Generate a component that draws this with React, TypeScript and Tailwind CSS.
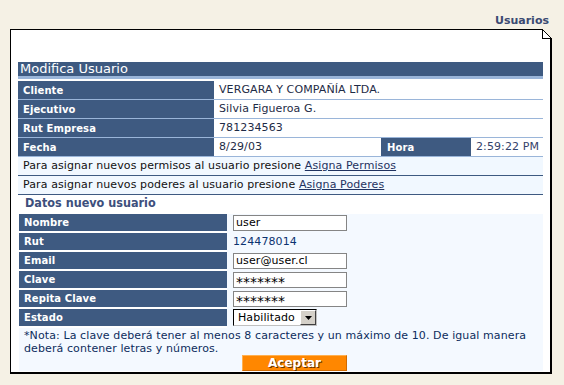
import React from 'react';

const verdana = "font-['DejaVu_Sans','Verdana',sans-serif]";
const tahoma = "font-['DejaVu_Sans_Condensed','DejaVu_Sans',sans-serif] [font-stretch:condensed]";

interface InfoRow {
  label: string;
  value: string;
}

const infoRows: InfoRow[] = [
  { label: 'Cliente', value: 'VERGARA Y COMPAÑÍA LTDA.' },
  { label: 'Ejecutivo', value: 'Silvia Figueroa G.' },
  { label: 'Rut Empresa', value: '781234563' },
];

const Label: React.FC<{ children: React.ReactNode; className?: string }> = ({ children, className = '' }) => (
  <div className={`bg-[#3e5a81] text-white font-bold text-[10px] flex items-center ${className}`}>
    {children}
  </div>
);

const TextInput: React.FC<{ value: string; secret?: boolean }> = ({ value, secret }) => (
  <div
    className={`w-[114px] h-[16px] bg-white border border-[#858585] pl-[2px] text-black ${
      secret ? 'text-[14px] leading-[12px] pt-[3px] tracking-normal' : 'text-[11px] leading-[14px]'
    }`}
  >
    {value}
  </div>
);

const FormRow: React.FC<{ label: string; children?: React.ReactNode }> = ({ label, children }) => (
  <div className="flex h-[19px]">
    <Label className="w-[208px] h-[17px] pl-[5px]">{label}</Label>
    <div className="flex-1 bg-[#f4f9ff] pl-[6px] flex items-start pt-[1px]">{children}</div>
  </div>
);

export default function App() {
  return (
    <div className={`w-[564px] h-[385px] bg-[#f5f1e5] pt-[13px] tracking-[0.1px] ${verdana}`}>
      <div className="flex justify-end pr-[15px] h-[16px] text-[11px] leading-[16px] font-bold text-[#3b4a72] tracking-normal">
        Usuarios
      </div>

      <div className="relative ml-[10px] w-[542px] bg-white border-l border-t border-r-2 border-b-2 border-black pt-[32px] px-[7px] pb-[1px]">
        {/* folded corner */}
        <svg className="absolute -top-px -right-[2px]" width="10" height="10" viewBox="0 0 10 10">
          <polygon points="0,0 10,0 10,10" fill="#f5f1e5" />
          <line x1="0.5" y1="0" x2="0.5" y2="9.5" stroke="#000" strokeWidth="1" />
          <line x1="0" y1="9.5" x2="10" y2="9.5" stroke="#000" strokeWidth="1" />
          <line x1="0" y1="0" x2="10" y2="10" stroke="#000" strokeWidth="1" />
        </svg>

        <div className="h-[14px] bg-[#3e5a81] text-white text-[13px] leading-[14px] pl-[2px] tracking-normal">Modifica Usuario</div>
        <div className="h-[3px] bg-[#9ab5d9]" />
        <div className="h-[2px]" />

        {infoRows.map((row) => (
          <div key={row.label} className="flex h-[19px] border-b border-[#9ab5d9]">
            <Label className="w-[196px] pl-[5px]">{row.label}</Label>
            <div className="flex-1 pl-[5px] flex items-center text-[11px] text-[#1e2b46]">{row.value}</div>
          </div>
        ))}
        <div className="flex h-[19px] border-b border-[#9ab5d9]">
          <Label className="w-[196px] pl-[5px]">Fecha</Label>
          <div className="w-[167px] pl-[5px] flex items-center text-[11px] text-[#1e2b46]">8/29/03</div>
          <Label className="w-[90px] pl-[6px]">Hora</Label>
          <div className="flex-1 pl-[5px] flex items-center text-[11px] text-[#34426a]">2:59:22 PM</div>
        </div>

        <div className="h-[19px] bg-[#f1f8ff] border-b border-[#3e5a81] pl-[5px] flex items-center text-[11px] text-[#111]">
          Para asignar nuevos permisos al usuario presione&nbsp;
          <a href="#" className="underline text-[#1f3260]">Asigna Permisos</a>
        </div>
        <div className="h-[19px] bg-[#f1f8ff] border-b border-[#3e5a81] pl-[5px] flex items-center text-[11px] text-[#111]">
          Para asignar nuevos poderes al usuario presione&nbsp;
          <a href="#" className="underline text-[#1f3260]">Asigna Poderes</a>
        </div>

        <div className={`h-[19px] pt-[1px] pl-[7px] text-[12.5px] leading-[14px] font-bold text-[#3d4f7c] tracking-normal ${tahoma}`}>
          Datos nuevo usuario
        </div>

        <div className="pl-px">
          <FormRow label="Nombre">
            <TextInput value="user" />
          </FormRow>
          <FormRow label="Rut">
            <span className="text-[11px] leading-[16px] text-[#0c3370]">124478014</span>
          </FormRow>
          <FormRow label="Email">
            <TextInput value="user@user.cl" />
          </FormRow>
          <FormRow label="Clave">
            <TextInput value="*******" secret />
          </FormRow>
          <FormRow label="Repita Clave">
            <TextInput value="*******" secret />
          </FormRow>
          <FormRow label="Estado">
            <div className="flex w-[84px] h-[17px] -mt-px bg-white border border-black border-r-[#c0c0c0] border-b-[#c0c0c0]">
              <div className="flex-1 pl-[4px] text-[11px] leading-[15px] text-black">Habilitado</div>
              <div className="w-[16px] h-[15px] bg-[#d4d0c8] border border-t-white border-l-white border-r-[#404040] border-b-[#404040] flex items-center justify-center">
                <svg width="7" height="4" viewBox="0 0 7 4">
                  <polygon points="0,0 7,0 3.5,4" fill="#000" />
                </svg>
              </div>
            </div>
          </FormRow>

          <div className="bg-[#f4f9ff] pt-px pl-[5px] text-[11px] leading-[13px] text-[#0d2d5d]">
            *Nota: La clave deberá tener al menos 8 caracteres y un máximo de 10. De igual manera
            <br />
            deberá contener letras y números.
          </div>
          <div className="bg-[#f4f9ff] h-[16px] pl-[223px] flex">
            <button className="w-[105px] h-[16px] bg-[#ff8700] border border-t-[#ffb050] border-l-[#ffb050] border-r-[#d06a00] border-b-[#d06a00] text-white text-[12px] leading-[13px] font-bold tracking-normal [text-shadow:1px_1px_0_#6a3300]">
              Aceptar
            </button>
          </div>
        </div>
      </div>
    </div>
  );
}
